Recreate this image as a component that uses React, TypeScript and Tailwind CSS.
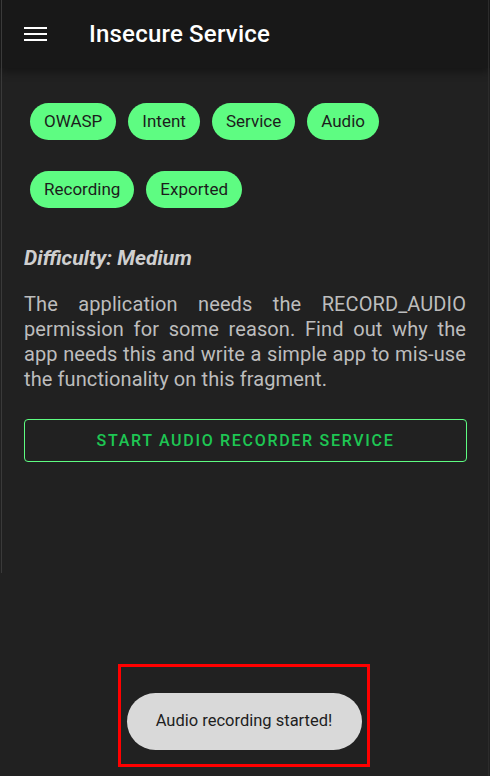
import React from 'react';

const TAGS_ROW_1 = ['OWASP', 'Intent', 'Service', 'Audio'];
const TAGS_ROW_2 = ['Recording', 'Exported'];

function Chip({ label }: { label: string }) {
  return (
    <span className="inline-flex h-[37px] items-center rounded-full bg-[#5efc82] px-[14px] text-[17px] text-[#1c1c1c]">
      {label}
    </span>
  );
}

export default function App() {
  return (
    <div
      className="relative flex h-[776px] w-[490px] flex-col overflow-hidden bg-[#212121]"
      style={{ fontFamily: 'Roboto, "Noto Sans", sans-serif' }}
    >
      {/* thin edge lines */}
      <div className="absolute left-[1px] top-0 h-[573px] w-[1px] bg-[#3a3a3a]" />
      <div className="absolute right-[1px] top-0 h-full w-[1px] bg-[#2c2c2c]" />

      {/* Toolbar */}
      <header className="flex h-[68px] shrink-0 items-center bg-[#181818] shadow-[0_4px_8px_rgba(0,0,0,0.35)]">
        <div className="ml-[24px] flex w-[23px] flex-col gap-[4px]">
          <span className="h-[2px] w-full bg-white" />
          <span className="h-[2px] w-full bg-white" />
          <span className="h-[2px] w-full bg-white" />
        </div>
        <h1 className="ml-[42px] text-[24px] font-medium tracking-[0.2px] text-white">Insecure Service</h1>
      </header>

      {/* Content */}
      <main className="flex flex-col px-[24px] pt-[35px]">
        <div className="flex flex-col gap-[31px] pl-[6px]">
          <div className="flex gap-[12px]">
            {TAGS_ROW_1.map((t) => (
              <Chip key={t} label={t} />
            ))}
          </div>
          <div className="flex gap-[12px]">
            {TAGS_ROW_2.map((t) => (
              <Chip key={t} label={t} />
            ))}
          </div>
        </div>

        <p className="mt-[37px] text-[21px] font-bold italic leading-[26px] text-[#cfcfcf]">Difficulty: Medium</p>

        <p className="mt-[21px] text-justify text-[20px] leading-[25px] tracking-[0.1px] text-[#bdbdbd]">
          The application needs the RECORD_AUDIO permission for some reason. Find out why the app needs this and
          write a simple app to mis-use the functionality on this fragment.
        </p>

        <button className="mt-[27px] flex h-[43px] w-[443px] items-center justify-center rounded-[4px] border border-[#5efc82] text-[16px] font-medium tracking-[1.7px] text-[#1ec653]">
          START AUDIO RECORDER SERVICE
        </button>
      </main>

      {/* Toast */}
      <div className="absolute left-[118px] top-[664px] flex h-[103px] w-[252px] items-center justify-center border-[3px] border-[#ff0000]">
        <div className="mt-[11px] flex h-[57px] w-[235px] items-center justify-center rounded-full bg-[#d9d9d9] text-[16.5px] text-[#1e1e1e]">
          Audio recording started!
        </div>
      </div>
    </div>
  );
}
